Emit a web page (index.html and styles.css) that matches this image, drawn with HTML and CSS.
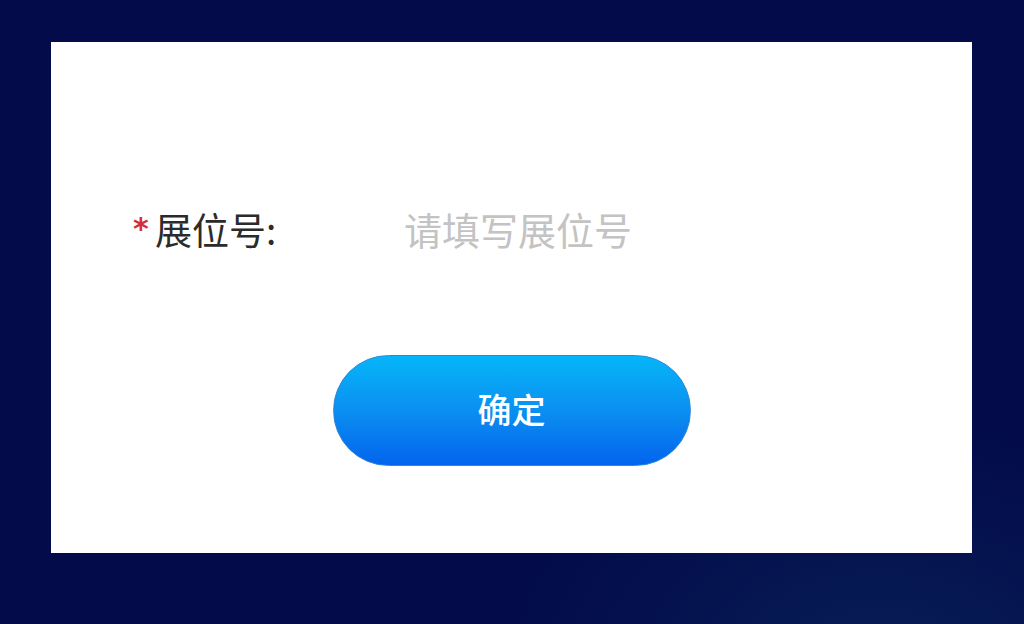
FILE: index.html
```html
<!DOCTYPE html>
<html lang="zh">
<head>
<meta charset="utf-8">
<link rel="stylesheet" href="styles.css">
</head>
<body>
<div class="card">
  <div class="row">
    <span class="req">*</span>
    <span class="label">展位号:</span>
    <span class="placeholder">请填写展位号</span>
  </div>
  <div class="actions">
    <button class="btn">确定</button>
  </div>
</div>
</body>
</html>
```
FILE: styles.css
```css
html, body {
  margin: 0;
  padding: 0;
  height: 100%;
}
body {
  background: radial-gradient(ellipse 380px 240px at 880px 660px, #071d55 0%, rgba(7,29,85,0) 100%), #030b4b;
  font-family: "Noto Sans CJK SC", "Noto Sans", sans-serif;
  padding: 42px 0 0 51px;
  box-sizing: border-box;
}
.card {
  width: 921px;
  height: 511px;
  background: #ffffff;
  box-sizing: border-box;
  padding-top: 167px;
}
.row {
  display: flex;
  align-items: center;
  height: 40px;
  padding-left: 82px;
}
.req {
  color: #d22f3a;
  font-family: "DejaVu Sans", sans-serif;
  font-size: 30px;
  font-weight: bold;
  width: 22px;
  line-height: 1;
}
.label {
  color: #2b2b2b;
  font-size: 37px;
  line-height: 40px;
  width: 249px;
}
.placeholder {
  color: #c3c3c3;
  font-size: 38px;
  line-height: 40px;
}
.actions {
  display: flex;
  justify-content: center;
  margin-top: 106px;
}
.btn {
  width: 358px;
  height: 111px;
  border-radius: 56px;
  border: 1.5px solid #2f88d6;
  background: linear-gradient(180deg, #05b6f9 0%, #0b8ff0 50%, #0364ee 100%);
  color: #ffffff;
  font-family: "Noto Sans CJK SC", "Noto Sans", sans-serif;
  font-size: 34px;
  font-weight: 500;
  padding: 0 0 4px 0;
  box-sizing: border-box;
}
```
